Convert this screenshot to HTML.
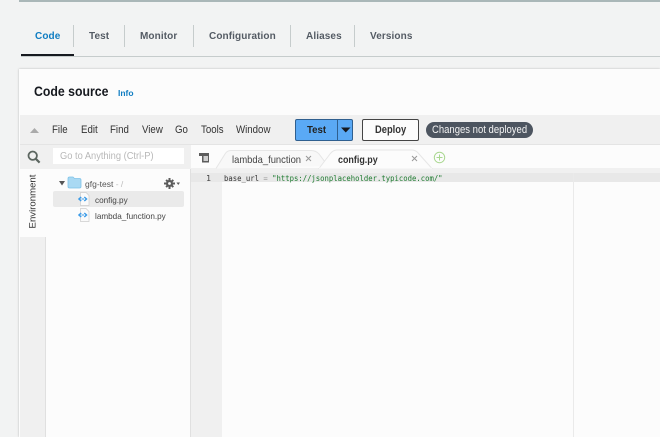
<!DOCTYPE html>
<html><head><meta charset="utf-8"><style>
html,body{margin:0;padding:0}
body{width:660px;height:437px;overflow:hidden;position:relative;background:#f2f3f3;font-family:"Liberation Sans",sans-serif;color:#444}
.a{position:absolute;white-space:nowrap;transform-origin:0 50%}
.b{position:absolute}
.tab{position:absolute;top:30px;font-size:10px;font-weight:bold;color:#545b64;letter-spacing:.1px;line-height:14px}
.sep{position:absolute;top:25px;width:1px;height:22px;background:#c6cccc}
.m{position:absolute;top:124px;font-size:11px;line-height:13px;color:#333;transform:scaleX(.88);transform-origin:0 50%;white-space:nowrap}
</style></head><body>
<div class="b" style="left:19px;top:0;width:641px;height:1.5px;background:#aab7b8"></div>
<div class="tab" style="left:35px;color:#0f7dc2">Code</div>
<div class="tab" style="left:89px">Test</div>
<div class="tab" style="left:140px">Monitor</div>
<div class="tab" style="left:209px">Configuration</div>
<div class="tab" style="left:306px">Aliases</div>
<div class="tab" style="left:370px">Versions</div>
<div class="sep" style="left:73px"></div><div class="sep" style="left:124px"></div><div class="sep" style="left:193px"></div><div class="sep" style="left:290px"></div><div class="sep" style="left:354px"></div>
<div class="b" style="left:21px;top:56px;width:639px;height:1px;background:#c6cccc"></div>
<div class="b" style="left:21px;top:54px;width:53px;height:2px;background:#16191f"></div>

<div class="b" style="left:19px;top:69px;width:641px;height:368px;background:#fcfcfc;box-shadow:0 0 2px rgba(0,0,0,.25)"></div>
<div class="a" style="left:34px;top:83px;font-size:13.5px;font-weight:bold;color:#16191f;line-height:17px;transform:scaleX(.91)">Code source</div>
<div class="a" style="left:118px;top:88px;font-size:8.5px;font-weight:bold;color:#0f7dc2;line-height:11px">Info</div>

<div class="b" style="left:20px;top:115px;width:640px;height:29px;background:#f0f0f0;border-bottom:1px solid #e4e4e4"></div>
<svg class="b" style="left:29px;top:127px" width="11" height="7"><path d="M5.5 1L10 6H1z" fill="#aaa"/></svg>
<div class="m" style="left:52px">File</div>
<div class="m" style="left:81px">Edit</div>
<div class="m" style="left:110px">Find</div>
<div class="m" style="left:142px">View</div>
<div class="m" style="left:175px">Go</div>
<div class="m" style="left:201px">Tools</div>
<div class="m" style="left:236px">Window</div>

<div class="b" style="left:295px;top:119px;width:58px;height:22px;background:#5aa9f5;border:1px solid #2f5f8f;border-radius:2px;box-sizing:border-box"></div>
<div class="b" style="left:337px;top:119px;width:1px;height:22px;background:#2f5f8f"></div>
<div class="a" style="left:307px;top:124px;font-size:10.5px;font-weight:bold;color:#222;line-height:13px;transform:scaleX(.92)">Test</div>
<svg class="b" style="left:341px;top:127px" width="10" height="6"><path d="M0 0.5H9.5L4.75 5.5z" fill="#16191f"/></svg>
<div class="b" style="left:362px;top:119px;width:57px;height:22px;background:#fcfcfc;border:1px solid #444;border-radius:2px;box-sizing:border-box"></div>
<div class="a" style="left:375px;top:124px;font-size:11px;font-weight:bold;color:#333;line-height:13px;transform:scaleX(.85)">Deploy</div>
<div class="b" style="left:426px;top:122px;width:107px;height:16px;background:#4d5560;border-radius:8px"></div>
<div class="a" style="left:432px;top:123.5px;color:#f4f4f4;font-size:11px;line-height:13px;transform:scaleX(.864)">Changes not deployed</div>

<!-- left bar -->
<div class="b" style="left:20px;top:145px;width:26px;height:292px;background:#f0f0f0"></div>
<div class="b" style="left:20px;top:145px;width:171px;height:24px;background:#f0f0f0"></div>
<div class="b" style="left:20px;top:169px;width:26px;height:68px;background:#fcfcfc"></div>
<div class="b" style="left:45px;top:237px;width:1px;height:200px;background:#e0e0e0"></div>
<div class="a" style="left:0px;top:195px;width:66px;text-align:center;font-size:9.6px;color:#333;line-height:13px;transform:rotate(-90deg);transform-origin:50% 50%">Environment</div>
<svg class="b" style="left:27px;top:150px" width="14" height="14"><circle cx="5.7" cy="5.7" r="4.2" fill="none" stroke="#5c6660" stroke-width="1.8"/><path d="M8.8 8.8L12.6 12.6" stroke="#5c6660" stroke-width="2.2"/></svg>
<div class="b" style="left:53px;top:148px;width:131px;height:16px;background:#fff"></div>
<div class="a" style="left:60px;top:150px;font-size:10px;color:#b8b8b8;line-height:13px;transform:scaleX(.93)">Go to Anything (Ctrl-P)</div>

<!-- tree -->
<svg class="b" style="left:59px;top:181px" width="6" height="5"><path d="M0 0H6L3 4.5z" fill="#555"/></svg>
<svg class="b" style="left:67px;top:176px" width="15" height="13"><path d="M1 2.5Q1 1 2.5 1H6L7.5 2.5H12.5Q14 2.5 14 4V10.5Q14 12 12.5 12H2.5Q1 12 1 10.5z" fill="#a9d9f3" stroke="#7ec2e8" stroke-width=".8"/></svg>
<div class="a" style="left:85px;top:178px;font-size:8.5px;color:#555;line-height:12px">gfg-test <span style="color:#bbb">- /</span></div>
<svg class="b" style="left:163px;top:177px" width="18" height="13"><g fill="#5c5c5c"><circle cx="6.5" cy="6.5" r="3.6"/><path d="M5.5 1h2v2h-2zM5.5 10h2v2h-2zM1 5.5h2v2H1zM10 5.5h2v2h-2zM2.4 3.6l1.4-1.4 1.4 1.4-1.4 1.4zM8.2 9.4l1.4-1.4 1.4 1.4-1.4 1.4zM2.4 9.4l1.4-1.4 1.4 1.4-1.4 1.4zM8.2 3.6l1.4-1.4 1.4 1.4-1.4 1.4z"/><path d="M13.5 5.5H17L15.25 8z"/></g><circle cx="6.5" cy="6.5" r="1.4" fill="#fcfcfc"/></svg>
<div class="b" style="left:53px;top:191px;width:131px;height:16px;background:#eaeaea;border-radius:2px"></div>
<svg class="b" style="left:78px;top:192px" width="12" height="14"><path d="M2.5 .5H8L11 3.5V13.5H2.5z" fill="#fafafa" stroke="#ccc" stroke-width=".7"/><path d="M3.2 5L1 7L3.2 9M6.3 5L8.5 7L6.3 9" fill="none" stroke="#3b9be8" stroke-width="1.5"/><path d="M3.5 7H6" stroke="#3b9be8" stroke-width="1"/></svg>
<div class="a" style="left:95px;top:194px;font-size:8.5px;color:#444;line-height:12px;transform:scaleX(.96)">config.py</div>
<svg class="b" style="left:78px;top:208px" width="12" height="14"><path d="M2.5 .5H8L11 3.5V13.5H2.5z" fill="#fafafa" stroke="#ccc" stroke-width=".7"/><path d="M3.2 5L1 7L3.2 9M6.3 5L8.5 7L6.3 9" fill="none" stroke="#3b9be8" stroke-width="1.5"/><path d="M3.5 7H6" stroke="#3b9be8" stroke-width="1"/></svg>
<div class="a" style="left:95px;top:210px;font-size:8.5px;color:#444;line-height:12px;transform:scaleX(.96)">lambda_function.py</div>

<!-- right gutter -->
<div class="b" style="left:191px;top:145px;width:469px;height:23px;background:#fcfcfc"></div>
<div class="b" style="left:191px;top:168px;width:469px;height:5px;background:#f0f0f0"></div>
<div class="b" style="left:191px;top:169px;width:31px;height:268px;background:#f0f0f0"></div>
<div class="b" style="left:190px;top:169px;width:1px;height:268px;background:#e0e0e0"></div>
<div class="b" style="left:191px;top:173px;width:469px;height:9px;background:#e8e8e8"></div>
<div class="b" style="left:573px;top:173px;width:1px;height:264px;background:#eaeaea"></div>
<svg class="b" style="left:198px;top:152px" width="13" height="12"><path d="M1 1H11V10.5H4V4H1z" fill="#5c5c5c"/><path d="M5.5 4H10V9H5.5z" fill="#d0d0d0"/></svg>

<svg class="b" style="left:215px;top:149px" width="225" height="20"><path d="M1 19.5L10 5Q12 1.5 16 1.5H96Q101 1.5 104 5L113 17" fill="#f8f8f8" stroke="#e6e6e6"/><path d="M104 19.5L115 5Q118 1 122 1H197Q201 1 204 5L217 19.5z" fill="#fcfcfc" stroke="#e6e6e6"/><path d="M104 19.3H217" stroke="#fcfcfc" stroke-width="1"/></svg>
<div class="a" style="left:232px;top:153.5px;font-size:10.5px;color:#444;line-height:13px;transform:scaleX(.896)">lambda_function</div>
<svg class="b" style="left:305px;top:155px" width="7" height="7"><path d="M1 1L6 6M6 1L1 6" stroke="#999" stroke-width="1"/></svg>
<div class="a" style="left:338px;top:153.5px;font-size:10.5px;font-weight:bold;color:#333;line-height:13px;transform:scaleX(.85)">config.py</div>
<svg class="b" style="left:411px;top:155px" width="7" height="7"><path d="M1 1L6 6M6 1L1 6" stroke="#999" stroke-width="1"/></svg>
<svg class="b" style="left:433px;top:151px" width="13" height="13"><circle cx="6.5" cy="6.5" r="5.2" fill="none" stroke="#a9d78f"/><path d="M6.5 3.5V9.5M3.5 6.5H9.5" stroke="#a9d78f"/></svg>

<div class="a" style="left:191px;top:172.5px;width:20px;text-align:right;font:8.3px/10px 'DejaVu Sans Mono',monospace;color:#444">1</div>
<div class="a" style="left:224px;top:172.5px;font:8.3px/10px 'DejaVu Sans Mono',monospace;color:#333;transform:scaleX(.875)">base_url <span style="color:#999">=</span> <span style="color:#1d7a2f">"https://jsonplaceholder.typicode.com/"</span></div>
</body></html>
